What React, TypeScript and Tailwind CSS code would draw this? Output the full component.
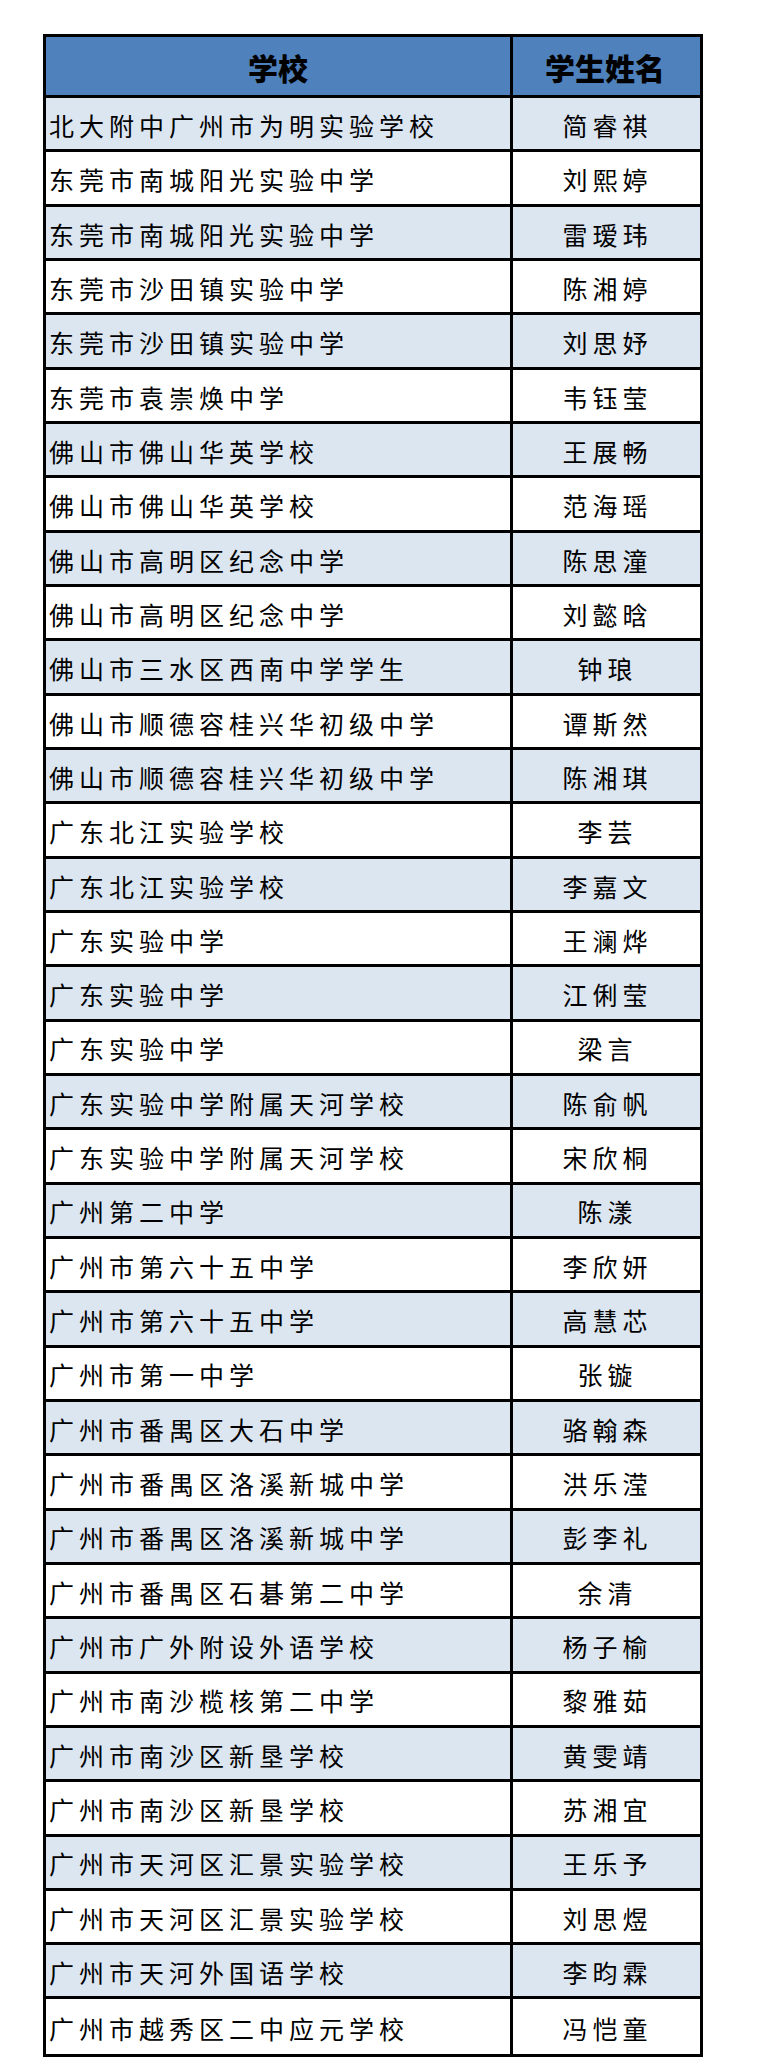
const rows: [string, string][] = [
  ['北大附中广州市为明实验学校', '简睿祺'],
  ['东莞市南城阳光实验中学', '刘熙婷'],
  ['东莞市南城阳光实验中学', '雷瑷玮'],
  ['东莞市沙田镇实验中学', '陈湘婷'],
  ['东莞市沙田镇实验中学', '刘思妤'],
  ['东莞市袁崇焕中学', '韦钰莹'],
  ['佛山市佛山华英学校', '王展畅'],
  ['佛山市佛山华英学校', '范海瑶'],
  ['佛山市高明区纪念中学', '陈思潼'],
  ['佛山市高明区纪念中学', '刘懿晗'],
  ['佛山市三水区西南中学学生', '钟琅'],
  ['佛山市顺德容桂兴华初级中学', '谭斯然'],
  ['佛山市顺德容桂兴华初级中学', '陈湘琪'],
  ['广东北江实验学校', '李芸'],
  ['广东北江实验学校', '李嘉文'],
  ['广东实验中学', '王澜烨'],
  ['广东实验中学', '江俐莹'],
  ['广东实验中学', '梁言'],
  ['广东实验中学附属天河学校', '陈俞帆'],
  ['广东实验中学附属天河学校', '宋欣桐'],
  ['广州第二中学', '陈漾'],
  ['广州市第六十五中学', '李欣妍'],
  ['广州市第六十五中学', '高慧芯'],
  ['广州市第一中学', '张镟'],
  ['广州市番禺区大石中学', '骆翰森'],
  ['广州市番禺区洛溪新城中学', '洪乐滢'],
  ['广州市番禺区洛溪新城中学', '彭李礼'],
  ['广州市番禺区石碁第二中学', '余清'],
  ['广州市广外附设外语学校', '杨子榆'],
  ['广州市南沙榄核第二中学', '黎雅茹'],
  ['广州市南沙区新垦学校', '黄雯靖'],
  ['广州市南沙区新垦学校', '苏湘宜'],
  ['广州市天河区汇景实验学校', '王乐予'],
  ['广州市天河区汇景实验学校', '刘思煜'],
  ['广州市天河外国语学校', '李昀霖'],
  ['广州市越秀区二中应元学校', '冯恺童'],
];

export default function App() {
  return (
    <div
      className="w-[762px] min-h-[2067px] bg-white pt-[34px] pl-[43px] text-black"
      style={{ fontFamily: '"Noto Sans CJK SC", "Noto Sans", sans-serif' }}
    >
      <div className="w-[660px] border-[3px] border-black flex flex-col">
        {/* Header */}
        <div className="flex h-[61px] border-b-[3px] border-black bg-[#4f81bd]">
          <div className="w-[464px] flex items-center justify-center pt-[3px] text-[30px] font-black">
            学校
          </div>
          <div className="w-[187px] border-l-[3px] border-black flex items-center justify-center pt-[3px] text-[30px] font-black">
            学生姓名
          </div>
        </div>

        {rows.map(([school, name], i) => (
          <div
            key={i}
            className={`flex h-[54.34px] border-black ${i < rows.length - 1 ? 'border-b-[3px]' : 'h-[51.34px]'} ${
              i % 2 === 0 ? 'bg-[#dce6f1]' : 'bg-white'
            }`}
          >
            <div className="w-[464px] flex items-center pl-[3px] pt-[4px] text-[25px] tracking-[5px] whitespace-nowrap">
              {school}
            </div>
            <div className="w-[187px] border-l-[3px] border-black flex items-center justify-center pl-[5px] pt-[4px] text-[25px] tracking-[5px] whitespace-nowrap">
              {name}
            </div>
          </div>
        ))}
      </div>
    </div>
  );
}
